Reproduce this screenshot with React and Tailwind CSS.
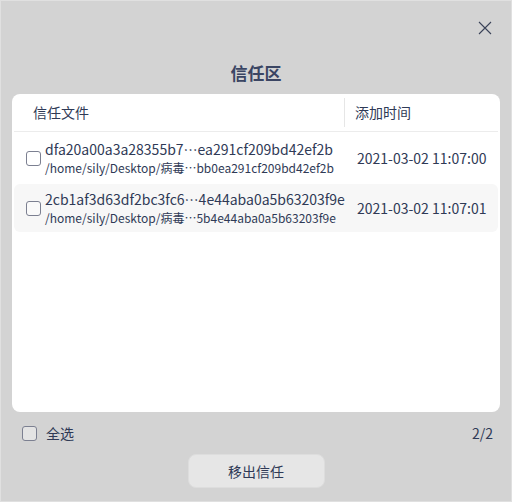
const rows = [
  {
    name: 'dfa20a00a3a28355b7⋯ea291cf209bd42ef2b',
    path: '/home/sily/Desktop/病毒⋯bb0ea291cf209bd42ef2b',
    time: '2021-03-02 11:07:00',
  },
  {
    name: '2cb1af3d63df2bc3fc6⋯4e44aba0a5b63203f9e',
    path: '/home/sily/Desktop/病毒⋯5b4e44aba0a5b63203f9e',
    time: '2021-03-02 11:07:01',
  },
];

function Box() {
  return <span className="block w-[15px] h-[15px] rounded-[3px] border-[1.5px] border-[#7c8091] bg-white/40 shrink-0" />;
}

export default function App() {
  return (
    <div
      lang="zh-CN"
      className="w-[512px] h-[502px] bg-[#d3d3d3] border border-[#e0e0e0] flex flex-col text-[#2f3a56]"
      style={{ fontFamily: '"Noto Sans CJK SC", "Noto Sans", sans-serif' }}
    >
      {/* close */}
      <div className="h-[56px] flex justify-end pt-[19px] pr-[19px]">
        <svg width="14" height="14" viewBox="0 0 14 14" className="mt-[1px]">
          <path d="M1 1L13 13M13 1L1 13" stroke="#3a4258" strokeWidth="1.1" />
        </svg>
      </div>

      <h1 className="text-center text-[17px] font-bold leading-[24px] mt-[4px] text-[#3a4563]">信任区</h1>

      {/* table */}
      <div className="mx-[11px] mt-[9px] h-[318px] bg-white rounded-[8px] px-[2px] flex flex-col">
        <div className="h-[38px] flex items-center border-b border-[#ececec] text-[14px]">
          <div className="w-[330px] pl-[19px]">信任文件</div>
          <div className="w-px h-[29px] bg-[#e6e6e6]" />
          <div className="pl-[10px]">添加时间</div>
        </div>
        <div className="pt-[2px] flex flex-col gap-[2px]">
          {rows.map((r, i) => (
            <div
              key={i}
              className={`h-[48px] flex items-center rounded-[6px] pl-[12px] ${i % 2 === 1 ? 'bg-[#f7f7f7]' : ''}`}
            >
              <Box />
              <div className="w-[315px] pl-[4px] flex flex-col">
                <span className="text-[14px] leading-[19px] -mt-[1px]">{r.name}</span>
                <span className="text-[12px] leading-[17px]">{r.path}</span>
              </div>
              <span className="text-[14px] pl-[1px]">{r.time}</span>
            </div>
          ))}
        </div>
      </div>

      {/* footer */}
      <div className="h-[42px] flex items-center pl-[21px] pr-[18px] text-[14px]">
        <Box />
        <span className="ml-[9px]">全选</span>
        <span className="ml-auto">2/2</span>
      </div>
      <div className="flex justify-center">
        <button className="w-[137px] h-[34px] rounded-[8px] bg-[#e6e6e6] border border-[#dddddd] text-[14px] text-[#2f3a56]">
          移出信任
        </button>
      </div>
    </div>
  );
}
